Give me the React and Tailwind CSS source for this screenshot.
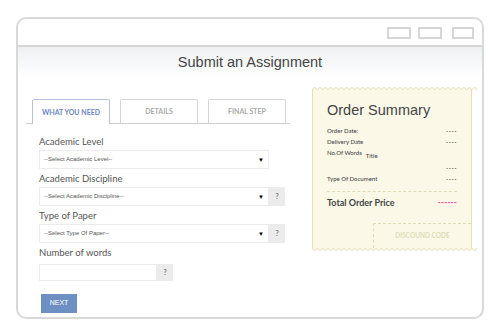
import React from 'react'

const paper = '#fbf8e8'
const edge = '#e6dfbd'

function Wave({ flip }) {
  const w = 160
  const step = 5.33
  let d = `M0 ${flip ? 0 : 4}`
  for (let x = 0; x < w; x += step) {
    d += ` Q${x + step / 2} ${flip ? 5 : -1} ${x + step} ${flip ? 0 : 4}`
  }
  const fill = flip ? `${d} L${w} 0 L0 0 Z` : `${d} L${w} 4 L0 4 Z`
  return (
    <svg width={w} height="4" viewBox={`0 0 ${w} 4`} className="block overflow-visible">
      <path d={fill} fill={paper} />
      <path d={d} fill="none" stroke={edge} strokeWidth="1" />
    </svg>
  )
}

function Field({ label, placeholder, help, className = '' }) {
  return (
    <div className={className}>
      <div className="text-[9.5px] leading-[12px] text-[#555]">{label}</div>
      <div className="flex mt-[2px]">
        <div className="w-[230px] h-[19px] border border-[#ececec] bg-white flex items-center justify-between pl-[4px] pr-[4px]">
          <span className="text-[6px] text-[#555] font-['Liberation_Sans']">{placeholder}</span>
          <span className="text-[6px] text-black">▼</span>
        </div>
        {help && (
          <div className="w-[16px] h-[19px] bg-[#ebebeb] flex items-center justify-center text-[7px] text-[#777] font-bold">?</div>
        )}
      </div>
    </div>
  )
}

function Row({ name, value = '----' }) {
  return (
    <div className="flex justify-between h-[11px] items-center text-[6px] text-[#4a4a4a] font-medium">
      <span>{name}</span>
      <span className="tracking-[0.5px] font-bold">{value}</span>
    </div>
  )
}

export default function App() {
  return (
    <div className="w-[500px] h-[333px] bg-white pt-[17px] pl-[16px] font-['Lato',sans-serif]">
      <div className="w-[468px] h-[302px] border-2 border-[#d9d9d9] rounded-[10px] bg-white overflow-hidden flex flex-col">
        <div className="h-[28px] flex items-start justify-end pt-[8px] pr-[8px] border-b-2 border-[#d6d6d6]">
          <div className="w-[24px] h-[12px] border-2 border-[#d6d6d6]" />
          <div className="w-[24px] h-[12px] border-2 border-[#d6d6d6] ml-[7px]" />
          <div className="w-[22px] h-[12px] border-2 border-[#d6d6d6] ml-[10px]" />
        </div>
        <div className="h-[31px] bg-gradient-to-b from-[#eef1f2] to-white flex items-center justify-center">
          <h1 className="text-[14.5px] text-[#444] font-['Liberation_Sans',sans-serif]">Submit an Assignment</h1>
        </div>

        <div className="flex items-start pl-[8px] pt-[8px]">
          <div className="w-[264px] pt-[13px]">
            <div className="flex gap-[10px] pl-[6px] border-b border-[#cfcfcf] h-[25px]">
              <div className="w-[78px] h-[25px] border border-b-0 border-[#b4c3df] rounded-t-[2px] bg-white flex items-center justify-center text-[7px] font-bold text-[#6a86c1]">WHAT YOU NEED</div>
              <div className="w-[78px] h-[24px] border border-b-0 border-[#d4d4d4] rounded-t-[2px] flex items-center justify-center text-[7px] font-bold text-[#aaa]">DETAILS</div>
              <div className="w-[78px] h-[24px] border border-b-0 border-[#d4d4d4] rounded-t-[2px] flex items-center justify-center text-[7px] font-bold text-[#aaa]">FINAL STEP</div>
            </div>

            <div className="pl-[13px]">
              <Field className="mt-[12px]" label="Academic Level" placeholder="--Select Academic Level--" />
              <Field className="mt-[4px]" label="Academic Discipline" placeholder="--Select Academic Discipline--" help />
              <Field className="mt-[4px]" label="Type of Paper" placeholder="--Select Type Of Paper--" help />
              <div className="mt-[4px]">
                <div className="text-[9.5px] leading-[12px] text-[#555]">Number of words</div>
                <div className="flex mt-[5px]">
                  <div className="w-[118px] h-[17px] border border-[#ececec] bg-white" />
                  <div className="w-[16px] h-[17px] bg-[#ebebeb] flex items-center justify-center text-[7px] text-[#777] font-bold">?</div>
                </div>
              </div>
              <button className="mt-[13px] ml-[2px] w-[36px] h-[19px] bg-[#6e8fc4] text-white text-[7px] font-['Liberation_Sans'] flex items-center justify-center">NEXT</button>
            </div>
          </div>

          <div className="ml-[22px] w-[160px] flex flex-col">
            <Wave />
            <div className="h-[158px] bg-[#fbf8e8] border-x border-[#e6dfbd] flex flex-col">
              <div className="px-[14px]">
                <div className="mt-[10px] text-[14.5px] leading-[20px] text-[#444] font-['Liberation_Sans',sans-serif]">Order Summary</div>
                <div className="mt-[5px]">
                  <Row name="Order Date:" />
                  <Row name="Delivery Date" />
                  <div className="flex h-[11px] items-center text-[6px] text-[#4a4a4a] font-medium">
                    <span>No.Of Words</span>
                    <span className="ml-[4px] mt-[6px]">Title</span>
                  </div>
                  <div className="mt-[4px]"><Row name="" /></div>
                  <Row name="Type Of Document" />
                </div>
                <div className="mt-[7px] border-t border-dashed border-[#e2dcb4]" />
                <div className="mt-[4px] flex justify-between items-center h-[14px]">
                  <span className="text-[9px] font-bold text-[#444]">Total Order Price</span>
                  <span className="text-[9px] font-black text-[#e466aa] tracking-[0.2px] font-['Liberation_Sans']">------</span>
                </div>
              </div>
              <div className="mt-auto ml-[60px] h-[25px] border-t border-l border-dashed border-[#e2dcb4] flex items-center justify-center text-[6.5px] font-bold text-[#e2dcb8]">DISCOUND CODE</div>
            </div>
            <Wave flip />
          </div>
        </div>
      </div>
    </div>
  )
}
